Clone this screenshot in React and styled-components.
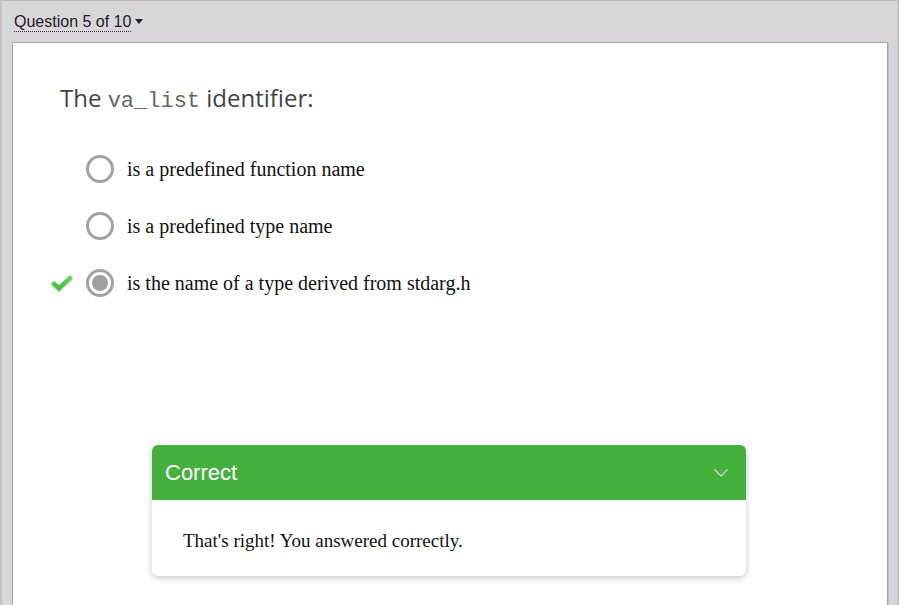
import React from "react";
import styled, { createGlobalStyle } from "styled-components";

const Global = createGlobalStyle`
  html, body { margin: 0; padding: 0; }
  body { background: #d8d6db; overflow: hidden; }
`;

const Page = styled.div`
  width: 899px;
  height: 605px;
  box-sizing: border-box;
  border-top: 1px solid #bdbbc0;
  border-left: 2px solid #c4c2c7;
  border-right: 2px solid #c4c2c7;
  background: #d8d6db;
  display: flex;
  flex-direction: column;
  overflow: hidden;
`;

const TopBar = styled.div`
  height: 41px;
  box-sizing: border-box;
  padding: 11px 0 0 12px;
  display: flex;
  align-items: flex-start;
`;

const QuestionMenu = styled.span`
  font-family: "Liberation Sans", Arial, sans-serif;
  font-size: 16px;
  color: #1d1d1d;
  display: inline-flex;
  align-items: center;
  gap: 4px;
`;

const MenuLabel = styled.span`
  border-bottom: 1px dotted #333;
  line-height: 19px;
`;

const Caret = styled.span`
  width: 0;
  height: 0;
  border-left: 4.5px solid transparent;
  border-right: 4.5px solid transparent;
  border-top: 5px solid #222;
  margin-top: -2px;
`;

const Panel = styled.div`
  margin-left: 10px;
  width: 876px;
  flex: 1;
  box-sizing: border-box;
  background: #fff;
  border: 1px solid #a7a7a9;
  border-bottom: none;
  box-shadow: 1px 0 0 #c2c0c5;
  padding: 40px 0 0 35px;
`;

const Title = styled.h2`
  margin: 0 0 0 12px;
  font-family: "Open Sans", "Noto Sans", sans-serif;
  font-weight: 400;
  font-size: 24px;
  line-height: 30px;
  color: #444;
`;

const Code = styled.code`
  font-family: "Liberation Mono", "Courier New", monospace;
  font-size: 22px;
  color: #666;
`;

const Options = styled.div`
  margin-top: 38px;
  display: flex;
  flex-direction: column;
  gap: 29px;
`;

const Option = styled.label`
  display: flex;
  align-items: center;
  height: 28px;
`;

const CheckSlot = styled.span`
  width: 28px;
  height: 28px;
  display: flex;
  align-items: center;
  justify-content: center;
  margin-right: 10px;
`;

const Radio = styled.span`
  width: 28px;
  height: 28px;
  box-sizing: border-box;
  border-radius: 50%;
  border: 3px solid #a3a3a3;
  display: flex;
  align-items: center;
  justify-content: center;
  &::after {
    content: "";
    width: 16px;
    height: 16px;
    border-radius: 50%;
    background: ${(p) => (p.$checked ? "#a0a0a0" : "transparent")};
  }
`;

const OptionText = styled.span`
  margin-left: 13px;
  font-family: "Liberation Serif", "Times New Roman", serif;
  font-size: 20px;
  color: #111;
`;

const CardWrap = styled.div`
  margin-top: 148px;
  margin-left: -37px;
  display: flex;
  justify-content: center;
`;

const Card = styled.div`
  width: 594px;
  border-radius: 6px;
  background: #fff;
  box-shadow: 0 2px 6px rgba(0, 0, 0, 0.22);
  overflow: hidden;
`;

const CardHeader = styled.div`
  height: 55px;
  background: #46b03f;
  display: flex;
  align-items: center;
  justify-content: space-between;
  padding: 0 17px 0 13px;
`;

const CardTitle = styled.span`
  font-family: "Liberation Sans", Arial, sans-serif;
  font-size: 22px;
  color: #fff;
`;

const CardBody = styled.div`
  padding: 30px 31px 25px;
  font-family: "Liberation Serif", "Times New Roman", serif;
  font-size: 19px;
  line-height: 21px;
  color: #111;
`;

const CheckMark = () => (
  <svg width="26" height="22" viewBox="0 0 26 22">
    <path d="M2 12 L5 9 L10 13 L21 3 L24 6 L10 19 Z" fill="#d6d6d6" transform="translate(0 2)" />
    <defs>
      <linearGradient id="g" x1="0" y1="0" x2="0" y2="1">
        <stop offset="0" stopColor="#6fdc5c" />
        <stop offset="1" stopColor="#3fb33a" />
      </linearGradient>
    </defs>
    <path d="M2 12 L5 9 L10 13 L21 3 L24 6 L10 19 Z" fill="url(#g)" />
  </svg>
);

const Chevron = () => (
  <svg width="16" height="10" viewBox="0 0 16 10">
    <path d="M1.5 1.5 L8 8 L14.5 1.5" fill="none" stroke="#b9e3b3" strokeWidth="1.4" />
  </svg>
);

const options = [
  { text: "is a predefined function name" },
  { text: "is a predefined type name" },
  { text: "is the name of a type derived from stdarg.h", checked: true },
];

export default function App() {
  return (
    <>
      <Global />
      <Page>
        <TopBar>
          <QuestionMenu>
            <MenuLabel>Question 5 of 10</MenuLabel>
            <Caret />
          </QuestionMenu>
        </TopBar>
        <Panel>
          <Title>
            The <Code>va_list</Code> identifier:
          </Title>
          <Options>
            {options.map((o) => (
              <Option key={o.text}>
                <CheckSlot>{o.checked && <CheckMark />}</CheckSlot>
                <Radio $checked={o.checked} />
                <OptionText>{o.text}</OptionText>
              </Option>
            ))}
          </Options>
          <CardWrap>
            <Card>
              <CardHeader>
                <CardTitle>Correct</CardTitle>
                <Chevron />
              </CardHeader>
              <CardBody>That's right! You answered correctly.</CardBody>
            </Card>
          </CardWrap>
        </Panel>
      </Page>
    </>
  );
}
